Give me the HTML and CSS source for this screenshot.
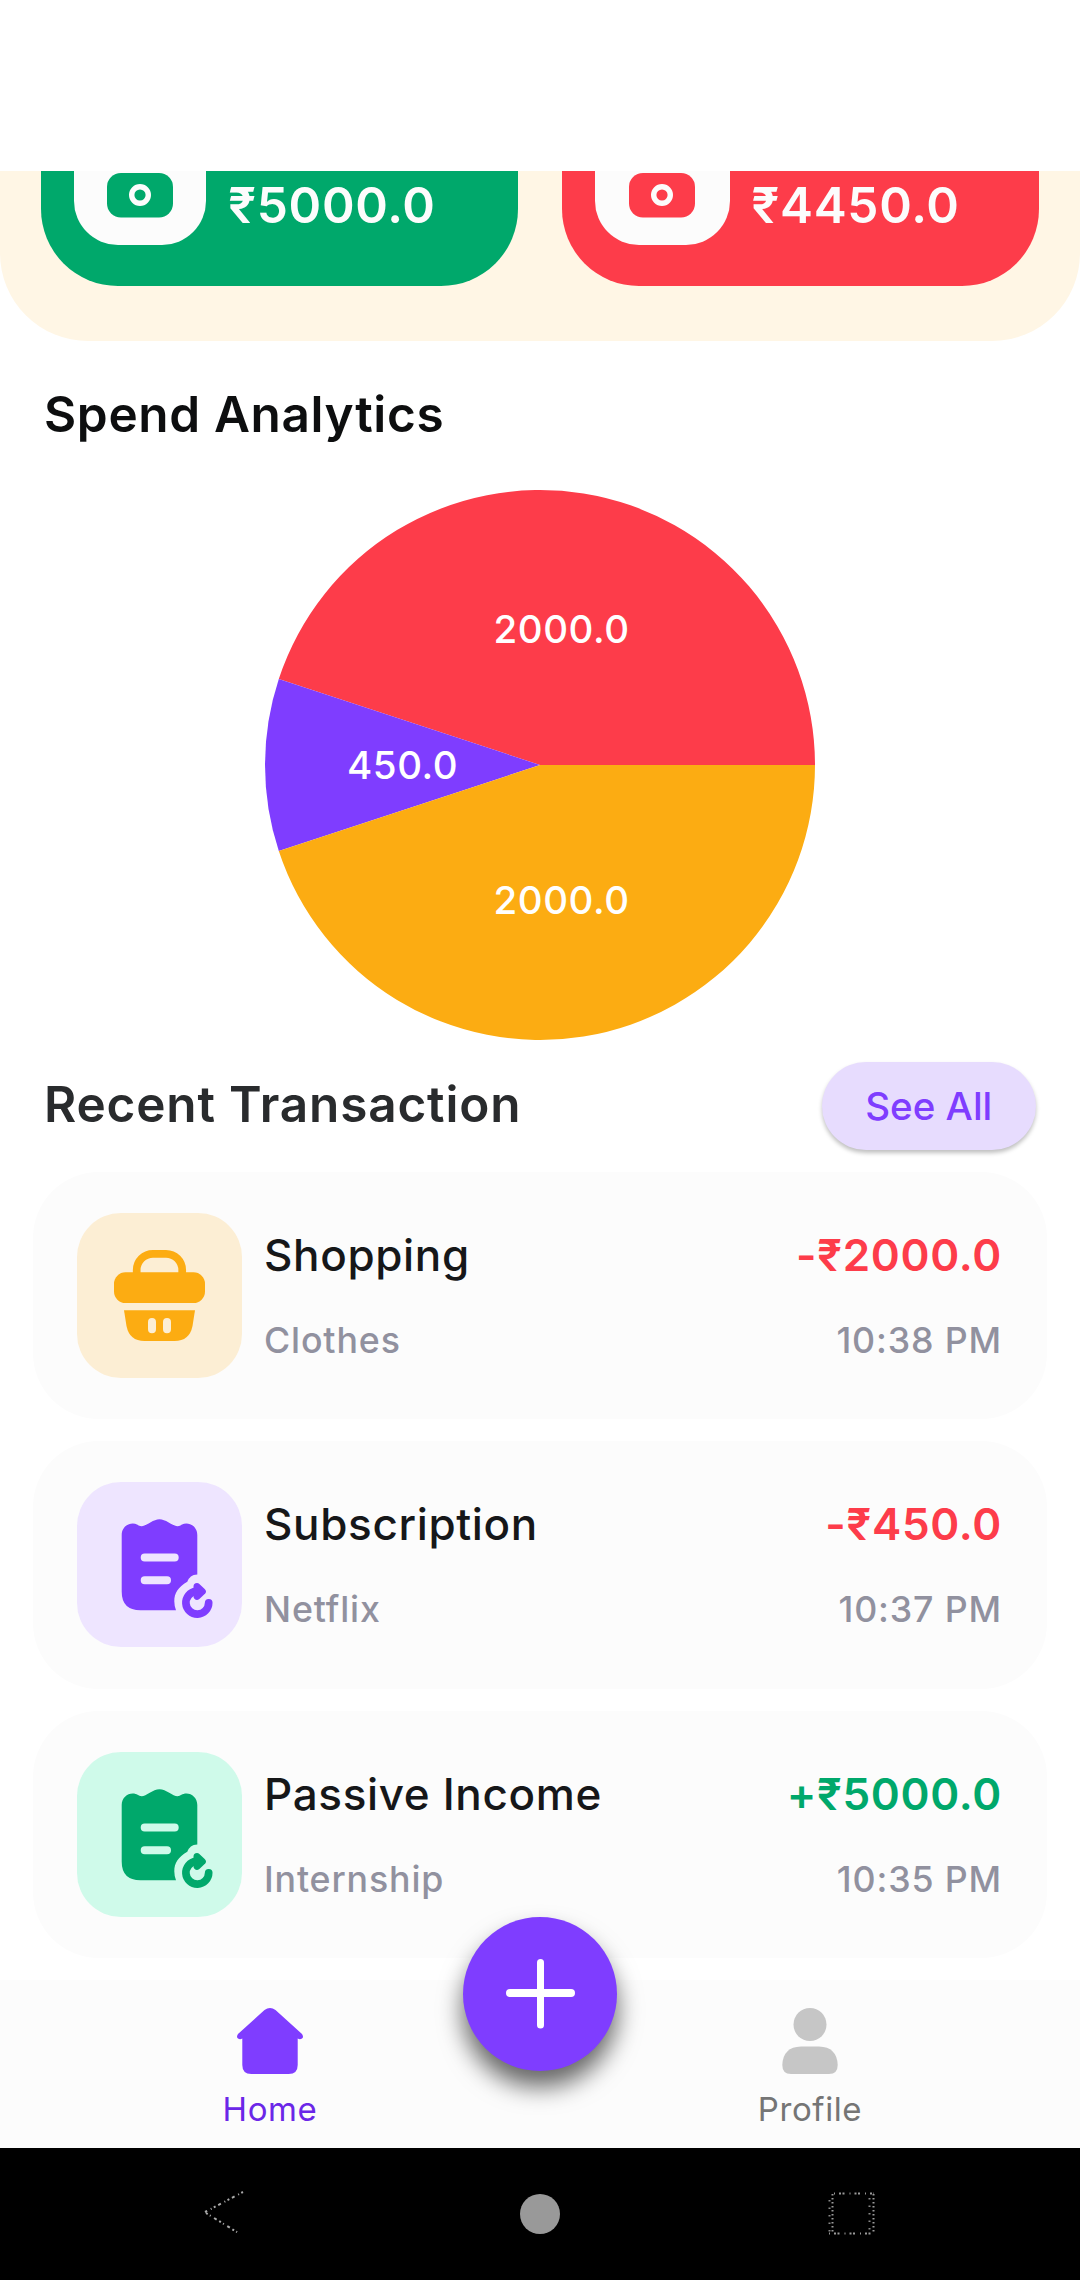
FILE: index.html
```html
<!DOCTYPE html>
<html lang="en">
<head>
<meta charset="utf-8">
<title>Expense Tracker</title>
<link rel="stylesheet" href="styles.css">
</head>
<body>
<svg class="defs" width="0" height="0">
  <symbol id="cash" viewBox="0 0 66 66">
    <rect x="0" y="11" width="66" height="44.5" rx="14"/>
    <circle cx="33" cy="33" r="8.3" fill="none" stroke="#fcfcfc" stroke-width="5.4"/>
  </symbol>
  <symbol id="bill" viewBox="0 0 165 165">
    <path d="M44.7 53C44.7 46 50 41.500 55.700 41.500C60 41.500 61.500 44.200 64.700 44.200C69 44.200 76 37.200 82.500 37.200C89 37.200 96 44.200 100.500 44.200C103.500 44.200 105 41.500 109.500 41.500C115 41.500 120.300 46 120.300 53V92.500C115 92.700 112 95.500 110.300 99.800C101 105 97.300 111.500 97.300 119.200Q97.300 124 99 128.200H63.500Q44.700 128.200 44.700 109.500Z"/>
    <path class="cut" d="M67.700 75.500H97.700M67.700 98.200H90"/>
    <path d="M131.700 120.800A11.400 11.400 0 1 1 119 109.400" fill="none" stroke="currentColor" stroke-width="7.700" stroke-linecap="round"/>
    <path d="M120 104.600L125.300 109.500L120 114.400Z" stroke="currentColor" stroke-width="7" stroke-linejoin="round"/>
  </symbol>
</svg>
<div class="screen">
  <header class="status"></header>
  <main class="content">
    <section class="summary">
      <div class="total income">
        <span class="badge"><svg width="66" height="66"><use href="#cash"/></svg></span>
        <span class="sum">₹5000.0</span>
      </div>
      <div class="total expense">
        <span class="badge"><svg width="66" height="66"><use href="#cash"/></svg></span>
        <span class="sum">₹4450.0</span>
      </div>
    </section>
    <h2 class="analytics-title">Spend Analytics</h2>
    <svg class="pie" width="550" height="550" viewBox="-275 -275 550 550">
      <path fill="#fd3c4a" d="M0 0L275 0A275 275 0 0 0 -261.2 -86Z"/>
      <path fill="#7f3dff" d="M0 0L-261.2 -86A275 275 0 0 0 -261.2 86Z"/>
      <path fill="#fcac12" d="M0 0L-261.2 86A275 275 0 0 0 275 0Z"/>
      <text x="-46.5" y="-122.5" textLength="135.5">2000.0</text>
      <text x="-193" y="13.5" textLength="110.5">450.0</text>
      <text x="-46.5" y="148.5" textLength="135.5">2000.0</text>
    </svg>
    <div class="recent">
      <h2>Recent Transaction</h2>
      <button class="see-all">See All</button>
    </div>
    <section class="list">
      <article class="item">
        <span class="icon shopping">
          <svg width="165" height="165" viewBox="0 0 165 165">
            <path d="M59.700 61V57A16.300 16.300 0 0 1 76 40.800H89A16.300 16.300 0 0 1 105.200 57V61" fill="none" stroke="currentColor" stroke-width="7.700"/>
            <rect x="37" y="59.300" width="91" height="30.700" rx="11.500"/>
            <path d="M47 97.300H118L115.500 113Q112.500 128 97.500 128H67.500Q52.500 128 49.500 113Z"/>
            <path class="cut" d="M75 109V116.300M90 109V116.300"/>
          </svg>
        </span>
        <div class="text"><h3>Shopping</h3><p>Clothes</p></div>
        <div class="text right"><strong class="neg">-₹2000.0</strong><p>10:38 PM</p></div>
      </article>
      <article class="item">
        <span class="icon subscription">
          <svg width="165" height="165"><use href="#bill"/></svg>
        </span>
        <div class="text"><h3>Subscription</h3><p>Netflix</p></div>
        <div class="text right"><strong class="neg">-₹450.0</strong><p>10:37 PM</p></div>
      </article>
      <article class="item">
        <span class="icon passive">
          <svg width="165" height="165"><use href="#bill"/></svg>
        </span>
        <div class="text"><h3>Passive Income</h3><p>Internship</p></div>
        <div class="text right"><strong class="pos">+₹5000.0</strong><p>10:35 PM</p></div>
      </article>
    </section>
  </main>
  <nav class="tabs">
    <a class="tab active">
      <svg width="66" height="66" viewBox="0 0 66 66"><path d="M27.500 2Q33 -2 38.500 2L65 26Q67 29 65 30.500Q63 32 60.700 30.500V57Q60.700 66 51.700 66H14.300Q5.300 66 5.300 57V30.500Q3 32 1 30.500Q-1 29 1 26Z"/></svg>
      <span>Home</span>
    </a>
    <button class="fab" aria-label="Add"><svg width="70" height="70" viewBox="0 0 70 70"><path d="M5 34H66" stroke-width="8"/><path d="M35.500 3.500V66" stroke-width="7"/></svg></button>
    <a class="tab">
      <svg width="66" height="66" viewBox="0 0 66 66"><circle cx="33" cy="16.500" r="16.500"/><path d="M5.300 57Q6 39 24 38.500H42Q60 39 60.700 57Q60.700 66 52 66H14Q5.300 66 5.300 57Z"/></svg>
      <span>Profile</span>
    </a>
  </nav>
  <footer class="system">
    <svg width="48" height="50" viewBox="0 0 48 50"><path d="M39 3L1 23M2 24L36 45" fill="none" stroke="#aaa" stroke-width="2" stroke-dasharray="2 2.500 1 4 3 3"/></svg>
    <span class="dot"></span>
    <svg width="48" height="44" viewBox="0 0 48 44"><path d="M6 1.500H46M1 41.500H44" fill="none" stroke="#999" stroke-width="2" stroke-dasharray="1 4 2 1.500 2 5"/><path d="M4.500 2V40M45.500 2V40" fill="none" stroke="#999" stroke-width="2" stroke-dasharray="1.500 2.500"/><path d="M1.500 8V40M41.500 6V38" fill="none" stroke="#888" stroke-width="2" stroke-dasharray="1.500 6"/></svg>
  </footer>
</div>
</body>
</html>
```
FILE: styles.css
```css
* { box-sizing: border-box; }
body { margin: 0; background: #fff; font-family: Inter, "Noto Sans", sans-serif; }
h2, h3, p { margin: 0; }
button { border: 0; padding: 0; font: inherit; }
.defs { position: absolute; }

.screen { width: 1080px; height: 2280px; display: flex; flex-direction: column; overflow: hidden; }
.status { height: 171px; flex: none; }
.content { height: 1809px; flex: none; overflow: hidden; }

.summary { height: 170px; padding: 0 41.25px 55px; display: flex; gap: 44px; background: #fff6e5; border-radius: 0 0 88px 88px; }
.total { flex: 1; height: 115px; padding-left: 33px; display: flex; border-radius: 0 0 77px 77px; }
.income { background: #00a86b; }
.expense { background: #fd3c4a; }
.badge { width: 132px; height: 74px; display: flex; justify-content: center; align-items: flex-end; padding-bottom: 17px; background: #fcfcfc; border-radius: 0 0 44px 44px; overflow: hidden; }
.income .badge { fill: #00a86b; }
.expense .badge { fill: #fd3c4a; width: 134.500px; }
.sum { margin: 4px 0 0 22px; font-size: 49.500px; line-height: 60px; font-weight: 600; color: #fcfcfc; letter-spacing: .7px; }

h2 { font-size: 49.500px; line-height: 60px; font-weight: 600; }
.analytics-title { margin: 43px 0 0 44px; color: #0d0e0f; letter-spacing: .650px; }
.pie { display: block; margin: 45.500px auto 0; }
.pie text { font-size: 38.500px; font-weight: 500; fill: #fff; }

.recent { height: 88px; margin-top: 22px; padding: 0 44px; display: flex; align-items: center; justify-content: space-between; }
.recent h2 { color: #292b2d; margin-top: -3px; letter-spacing: .830px; }
.see-all { width: 214.500px; height: 88px; padding-top: 1px; border-radius: 44px; background: #e7dcfe; color: #7f3dff; font-size: 38.500px; font-weight: 450; box-shadow: 0 3px 4px rgba(0,0,0,.25); }

.list { margin-top: 22.200px; padding: 0 33px; display: flex; flex-direction: column; gap: 22px; }
.item { height: 247.500px; padding: 0 44px; display: flex; align-items: center; background: #fcfcfc; border-radius: 66px; }
.icon { width: 165px; height: 165px; border-radius: 44px; fill: currentColor; }
.icon svg { display: block; }
.cut { fill: none; stroke: var(--tile); stroke-width: 8; stroke-linecap: round; }
.shopping { --tile: #fceed4; background: var(--tile); color: #fcac12; }
.subscription { --tile: #eee5ff; background: var(--tile); color: #7f3dff; }
.passive { --tile: #cffaea; background: var(--tile); color: #00a86b; }
.text { margin-left: 22px; display: flex; flex-direction: column; gap: 37px; }
.text h3, .text strong { font-size: 44px; line-height: 53px; font-weight: 500; color: #161719; letter-spacing: .650px; }
.text strong { font-weight: 600; letter-spacing: .7px; }
.text p { font-size: 35.750px; line-height: 43px; font-weight: 500; color: #91919f; letter-spacing: .850px; }
.right { margin-left: auto; padding-right: 1px; text-align: right; }
.text .neg { color: #fd3c4a; }
.text .pos { color: #00a86b; }

.tabs { position: relative; height: 168px; flex: none; display: flex; background: #fcfcfc; }
.tab { flex: 1; display: flex; flex-direction: column; align-items: center; padding-top: 28px; gap: 15px; font-size: 33px; line-height: 40px; color: #757575; fill: #c6c6c6; letter-spacing: .6px; }
.tab.active { color: #6b27e8; fill: #7f3dff; }
.fab { position: absolute; left: 463px; top: -63px; width: 154px; height: 154px; border-radius: 50%; background: #7f3dff; display: flex; align-items: center; justify-content: center; box-shadow: 0 16px 24px rgba(0,0,0,.6); }
.fab svg { overflow: visible; }
.fab path { stroke: #fff; stroke-linecap: round; }

.system { height: 132px; flex: none; background: #000; display: flex; align-items: center; justify-content: space-between; padding: 0 204px; }
.dot { width: 40px; height: 40px; border-radius: 50%; background: #999; }
```
